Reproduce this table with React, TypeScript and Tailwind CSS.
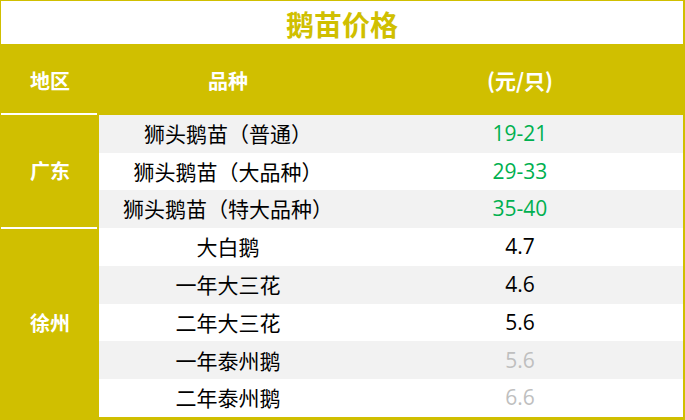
import React from "react";

const Y = "bg-[#D0BF00]";

type Row = { name: string; price: string; color: string; bg: string };

const gd: Row[] = [
  { name: "狮头鹅苗（普通）", price: "19-21", color: "text-[#00B050]", bg: "bg-[#F2F2F2]" },
  { name: "狮头鹅苗（大品种）", price: "29-33", color: "text-[#00B050]", bg: "bg-white" },
  { name: "狮头鹅苗（特大品种）", price: "35-40", color: "text-[#00B050]", bg: "bg-[#F2F2F2]" },
];
const xz: Row[] = [
  { name: "大白鹅", price: "4.7", color: "text-black", bg: "bg-white" },
  { name: "一年大三花", price: "4.6", color: "text-black", bg: "bg-[#F2F2F2]" },
  { name: "二年大三花", price: "5.6", color: "text-black", bg: "bg-white" },
  { name: "一年泰州鹅", price: "5.6", color: "text-[#BFBFBF]", bg: "bg-[#F2F2F2]" },
  { name: "二年泰州鹅", price: "6.6", color: "text-[#BFBFBF]", bg: "bg-white" },
];

const cjk = "font-['Microsoft_YaHei','Noto_Sans_CJK_SC',sans-serif]";
const num = "font-['Segoe_UI','Open_Sans','Noto_Sans_CJK_SC',sans-serif]";

function DataRow({ r }: { r: Row }) {
  return (
    <div className={`flex flex-1 ${r.bg}`}>
      <div className={`w-[258px] flex items-center justify-center text-[21px] text-black ${cjk}`}>{r.name}</div>
      <div className={`flex-1 flex items-center justify-center text-[21px] ${r.color} ${num}`}>{r.price}</div>
    </div>
  );
}

function Group({ region, rows, h, line }: { region: string; rows: Row[]; h: string; line: boolean }) {
  return (
    <div className={`flex ${h}`}>
      <div className="w-[98px] flex flex-col">
        <div className={`flex-1 flex items-center justify-center text-white font-bold text-[20px] ${cjk}`}>{region}</div>
        {line && <div className="h-[2px] bg-white mr-[2px] -mb-[1px]" />}
      </div>
      <div className="flex-1 flex flex-col">
        {rows.map((r, i) => (
          <DataRow key={i} r={r} />
        ))}
      </div>
    </div>
  );
}

export default function App() {
  return (
    <div className={`w-[685px] h-[420px] ${Y} pt-[1px] pl-[1px] pr-[2px] pb-[3px] flex flex-col ${cjk}`}>
      <div className="h-[43px] bg-white flex items-center justify-center pt-[3px]">
        <span className="text-[28px] font-bold text-[#D0BF00] leading-none">鹅苗价格</span>
      </div>
      <div className="h-[71px] flex text-white font-bold text-[20px]">
        <div className="w-[98px] flex flex-col">
          <div className="flex-1 flex items-center justify-center pt-[5px]">地区</div>
          <div className="h-[2px] bg-white mr-[2px]" />
        </div>
        <div className="w-[258px] flex items-center justify-center pt-[3px]">品种</div>
        <div className="flex-1 flex items-center justify-center pt-[3px] text-[21px]">(元/只)</div>
      </div>
      <div className="flex-1 flex flex-col">
        <Group region="广东" rows={gd} h="h-[113px]" line={true} />
        <Group region="徐州" rows={xz} h="flex-1" line={false} />
      </div>
    </div>
  );
}
